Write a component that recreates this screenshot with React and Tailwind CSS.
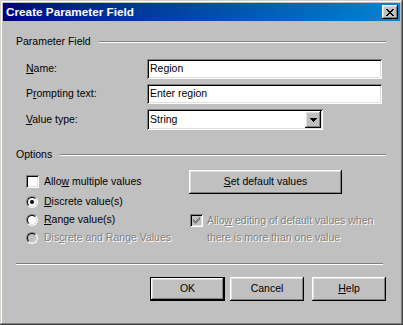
// App.jsx — "Create Parameter Field" dialog, Windows classic look

const font = "font-['Liberation_Sans',Arial,sans-serif]";
const raised =
  "shadow-[inset_-1px_-1px_#000,inset_1px_1px_#fff,inset_-2px_-2px_#808080,inset_2px_2px_#dfdfdf]";
const sunken =
  "shadow-[inset_1px_1px_#808080,inset_-1px_-1px_#fff,inset_2px_2px_#000,inset_-2px_-2px_#dfdfdf]";
const disabledText = "text-[#808080] [text-shadow:1px_1px_0_#fff]";

const Etch = ({ className = "" }) => (
  <div className={`h-0 border-t border-b border-t-[#808080] border-b-white ${className}`} />
);

const GroupTitle = ({ children, className = "" }) => (
  <div className={`flex items-center h-[14px] ${className}`}>
    <span className="whitespace-nowrap">{children}</span>
    <Etch className="flex-1 ml-[8px]" />
  </div>
);

const CheckBox = ({ checked, disabled, className = "" }) => (
  <div
    className={`w-[13px] h-[13px] shrink-0 flex items-center justify-center ${sunken} ${
      disabled ? "bg-[#c0c0c0]" : "bg-white"
    } ${className}`}
  >
    {checked && (
      <svg width="7" height="7" viewBox="0 0 7 7" shapeRendering="crispEdges">
        <path
          d="M0 2h1v1h1v1h1v-1h1v-1h1v-1h1v-1h1v3h-1v1h-1v1h-1v1h-1v1h-1v-1h-1v-1h-1v-1h-1z"
          fill={disabled ? "#808080" : "#000"}
        />
      </svg>
    )}
  </div>
);

const Radio = ({ checked, disabled }) => (
  <div className="w-[12px] h-[12px] shrink-0 rounded-full border border-t-[#808080] border-l-[#808080] border-b-white border-r-white">
    <div
      className={`w-full h-full rounded-full border border-t-[#000] border-l-[#000] border-b-[#dfdfdf] border-r-[#dfdfdf] flex items-center justify-center ${
        disabled ? "bg-[#c0c0c0]" : "bg-white"
      }`}
    >
      {checked && <div className="w-[4px] h-[4px] rounded-full bg-black" />}
    </div>
  </div>
);

const Button = ({ children, isDefault, className = "" }) => (
  <div
    className={`h-[24px] flex items-center justify-center bg-[#c0c0c0] ${
      isDefault ? "border border-black" : ""
    } ${className}`}
  >
    <div className={`w-full h-full flex items-center justify-center ${raised}`}>{children}</div>
  </div>
);

const FieldRow = ({ label, children, h = "h-[20px]" }) => (
  <div className={`flex items-center ${h}`}>
    <div className="w-[121px]">{label}</div>
    {children}
  </div>
);

export default function App() {
  return (
    <div
      className={`${font} text-[10.5px] text-black w-[403px] h-[325px] bg-[#c0c0c0] p-[3px] shadow-[inset_-1px_-1px_#404040,inset_1px_1px_#d4d0c8,inset_-2px_-2px_#808080,inset_2px_2px_#fff]`}
    >
      {/* title bar */}
      <div className="h-[18px] flex items-center justify-between pl-[3px] pr-[2px] bg-linear-to-r from-[#000080] to-[#1084d0]">
        <span className="text-white font-bold text-[11.75px]">Create Parameter Field</span>
        <div className={`w-[16px] h-[14px] bg-[#c0c0c0] flex items-center justify-center ${raised}`}>
          <svg width="8" height="7" viewBox="0 0 8 7" shapeRendering="crispEdges">
            <path
              d="M0 0h2v1h1v1h2v-1h1v-1h2v1h-1v1h-1v1h-1v1h1v1h1v1h1v1h-2v-1h-1v-1h-2v1h-1v1h-2v-1h1v-1h1v-1h1v-1h-1v-1h-1z"
              fill="#000"
            />
          </svg>
        </div>
      </div>

      <div className="pl-[13px] pr-[14px]">
        <GroupTitle className="mt-[14px]">Parameter Field</GroupTitle>

        <div className="ml-[10px] mt-[10px] flex flex-col gap-[5px]">
          <FieldRow label={<><u>N</u>ame:</>}>
            <div className={`w-[235px] h-[20px] bg-white flex items-center px-[3px] ${sunken}`}>Region</div>
          </FieldRow>
          <FieldRow label={<>P<u>r</u>ompting text:</>}>
            <div className={`w-[235px] h-[20px] bg-white flex items-center px-[3px] ${sunken}`}>
              Enter region
            </div>
          </FieldRow>
          <FieldRow label={<><u>V</u>alue type:</>} h="h-[21px]">
            <div className={`w-[176px] h-[21px] bg-white flex items-center justify-between pl-[3px] pr-[2px] ${sunken}`}>
              <span>String</span>
              <div className={`w-[16px] h-[17px] bg-[#c0c0c0] flex items-center justify-center ${raised}`}>
                <svg width="7" height="4" viewBox="0 0 7 4" shapeRendering="crispEdges">
                  <path d="M0 0h7v1h-1v1h-1v1h-1v1h-1v-1h-1v-1h-1v-1h-1z" fill="#000" />
                </svg>
              </div>
            </div>
          </FieldRow>
        </div>

        <GroupTitle className="mt-[18px]">Options</GroupTitle>

        <div className="flex mt-[8px] ml-[10px]">
          <div className="w-[163px] flex flex-col">
            <div className="h-[23px] flex items-center">
              <CheckBox />
              <span className="ml-[5px]">
                Allo<u>w</u> multiple values
              </span>
            </div>
            <div className="h-[18px] flex items-center">
              <Radio checked />
              <span className="ml-[6px]">
                <u>D</u>iscrete value(s)
              </span>
            </div>
            <div className="h-[18px] flex items-center">
              <Radio />
              <span className="ml-[6px]">
                <u>R</u>ange value(s)
              </span>
            </div>
            <div className="h-[18px] flex items-center">
              <Radio disabled />
              <span className={`ml-[6px] whitespace-nowrap ${disabledText}`}>
                Dis<u>c</u>rete and Range Values
              </span>
            </div>
          </div>

          <div className="flex flex-col">
            <Button className="w-[153px] h-[23px]">
              <span>
                <u>S</u>et default values
              </span>
            </Button>
            <div className="flex items-start mt-[18px] ml-[1px]">
              <CheckBox checked disabled className="mt-[2px]" />
              <div className={`ml-[4px] leading-[17px] whitespace-nowrap ${disabledText}`}>
                Allo<u>w</u> editing of default values when
                <br />
                there is more than one value
              </div>
            </div>
          </div>
        </div>

        <Etch className="mt-[16px] mr-[3px]" />

        <div className="flex mt-[12px] ml-[134px]">
          <Button isDefault className="w-[76px]">OK</Button>
          <Button className="w-[75px] ml-[5px]">Cancel</Button>
          <Button className="w-[75px] ml-[8px]">
            <span>
              <u>H</u>elp
            </span>
          </Button>
        </div>
      </div>
    </div>
  );
}
